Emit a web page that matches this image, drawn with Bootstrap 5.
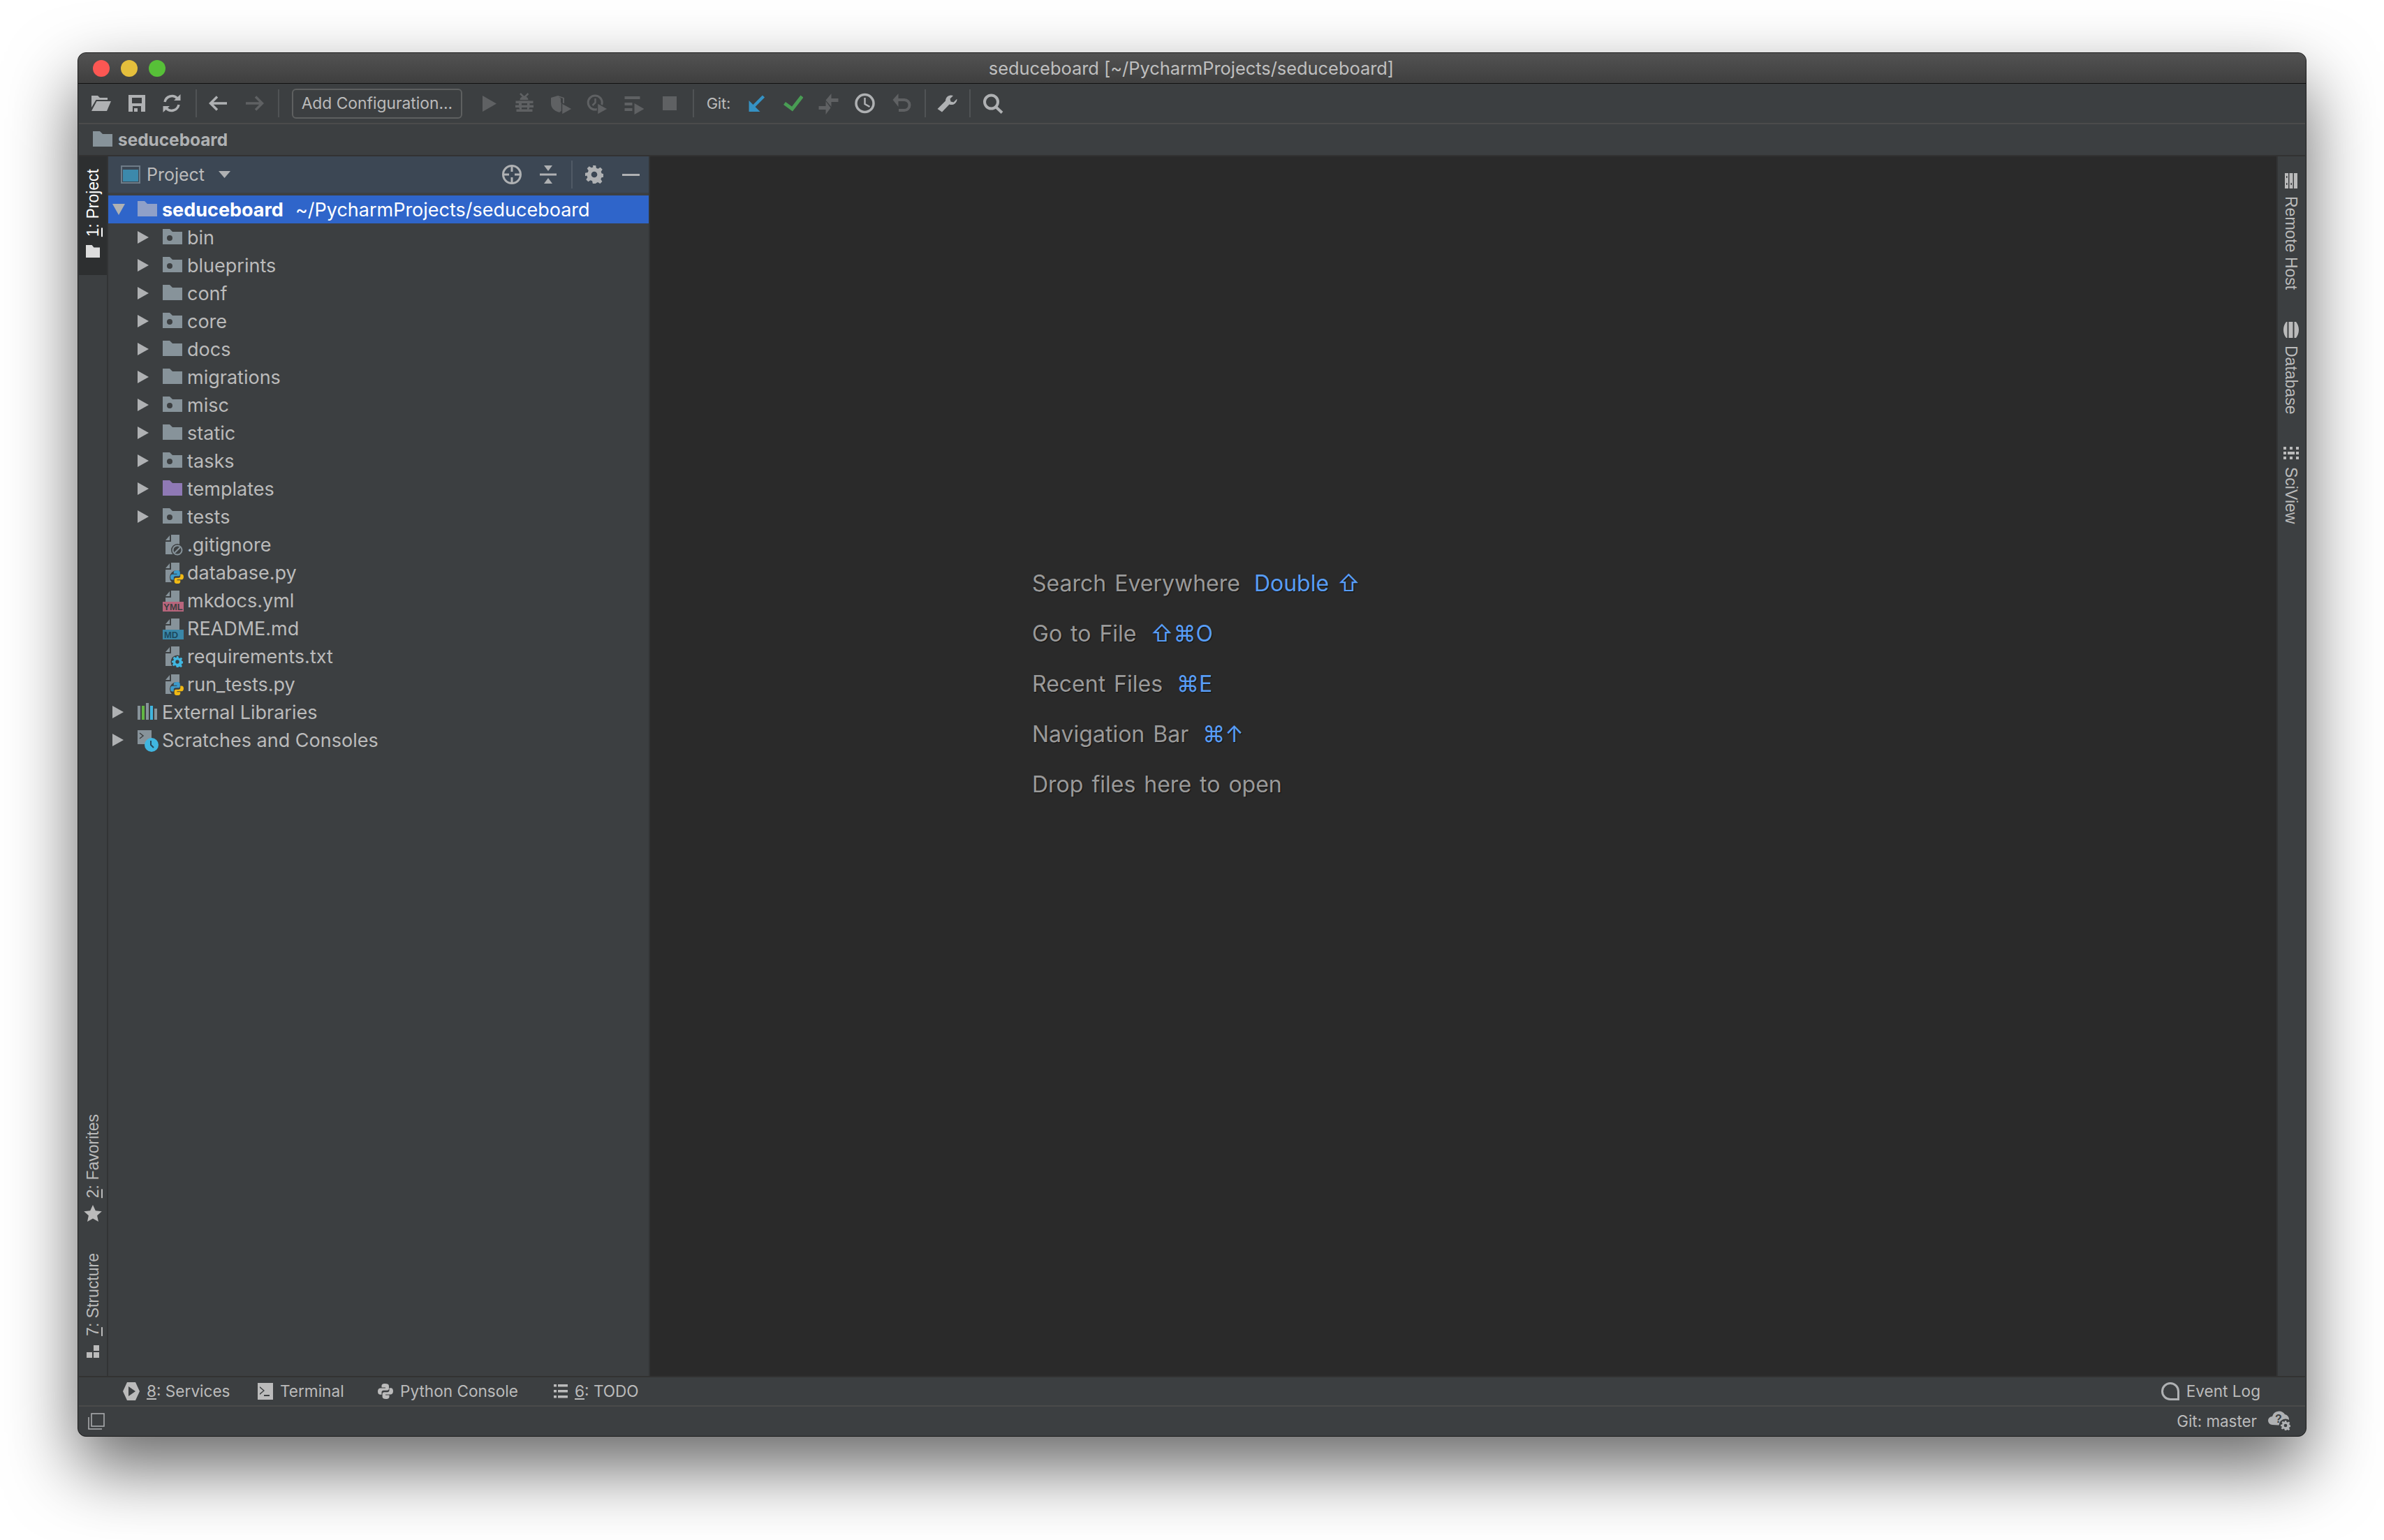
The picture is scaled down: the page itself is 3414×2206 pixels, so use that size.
<!DOCTYPE html>
<html lang="en">
<head>
<meta charset="utf-8">
<title>seduceboard</title>
<link rel="stylesheet" href="https://cdn.jsdelivr.net/npm/bootstrap@5.3.0/dist/css/bootstrap.min.css">
<style>
html,body{height:100%;margin:0}
body{background:#fff;font-family:Inter,"Liberation Sans",sans-serif;padding:75px 111px 148px;overflow:hidden}
.ide-win{height:1983px;border:1px solid #1c1c1c;border-radius:12px;overflow:hidden;box-shadow:0 44px 100px rgba(0,0,0,.6);background:#3c3f41;color:#bbb;padding:0 1px;font-size:26px}
.ide-title{height:44px;flex:none;background:linear-gradient(#525252,#3f3f3f);border-bottom:1px solid #111;margin:0 -1px;padding:0 21px;position:relative}
.tl{width:24px;height:24px;border-radius:50%;margin-right:16px}
.tl-r{background:#fc5753}.tl-y{background:#e5bf3c}.tl-g{background:#57c038}
.ide-title-text{position:absolute;left:-2px;right:0;text-align:center;color:#bfbfbf;font-size:25.4px;line-height:43px}
.ide-tb{height:58px;border-bottom:2px solid #4b4b4b;padding-left:6.5px;flex:none}
.slot{width:51.6px;height:44px;flex:none}
.slot-a{width:50.8px}
.slot-w{width:53px}
.slot-g{width:52px}
.vsep{width:2px;height:40px;background:#505355;flex:none}
.vs1{margin:0 3.5px 0 8px}
.vs2{margin:0 0 0 6.5px}
.vs3{margin:0 0 0 7.2px}
.vs4{margin:0 5.5px 0 6.5px}
.addcfg{width:244px;height:43px;margin-left:18px;margin-right:13px;border:2px solid #5e6060;border-radius:6px;color:#bbb;font-size:22.8px;padding:0;line-height:1;flex:none;background:transparent;white-space:nowrap}
.gitlbl{width:45.5px;flex:none;margin-left:18px;font-size:22px;color:#bbb;letter-spacing:-.2px}
.ide-nav{height:46px;flex:none;padding-left:20px;gap:8px;border-bottom:2px solid #323232;font-weight:700;color:#afb1b3;font-size:24.4px}
.ide-main{min-height:0}
.strip-l{width:42px;border-right:2px solid #323435;flex:none}
.strip-r{width:41px;flex:none;border-left:2px solid #323435;padding:24px 2px 0 0}
.vtext{writing-mode:vertical-rl;font-family:"Liberation Sans",sans-serif;font-size:23px;line-height:1;color:#bbb;white-space:nowrap}
.vflip{transform:rotate(180deg)}
.strip-item{padding:18px 0 25px;gap:12px}
.strip-on{background:#2d2f30;color:#fff}
.strip-on .vtext{color:#fff}
.fav-item{padding-bottom:0;margin-bottom:45px;gap:10px}
.str-item{padding:0 0 26px;gap:13px}
.r-item{gap:11px;margin-bottom:46px}
.panel{width:776px;flex:none;border-right:2px solid #323435}
.panel-h{height:52px;background:#3c4754;margin-bottom:4px;padding-left:18px;flex:none;color:#bbb}
.panel-title{margin-left:9px;margin-right:20px;width:83px;font-size:25px;padding-top:2px}
.pact{width:52px;height:40px;flex:none}
.pvsep{width:2px;height:40px;background:#505a66;flex:none;margin:0 5.5px 0 7px}
.tree{--bs-list-group-bg:transparent;--bs-list-group-border-width:0;--bs-list-group-color:#bbb;--bs-list-group-item-padding-y:0;--bs-list-group-item-padding-x:0;border-radius:0}
.tree .list-group-item{height:40px;display:flex;align-items:center;padding:2px 0 0 6px;font-size:27px;white-space:nowrap;border-radius:0}
.tree .list-group-item.lv1{padding-left:42px}
.tree .list-group-item.sel{background:#2f65ca;color:#fff}
.tw{width:36px;flex:none;display:flex}
.ti{width:35px;flex:none;display:flex}
.tw svg,.ti svg{display:block;margin-top:-2px;overflow:visible}
.root-name{font-weight:700;margin-right:17px}
.editor{background:#2a2a2a;padding:576px 0 0 547px;min-width:0}
.hint{height:72px;font-size:32px;word-spacing:3px;color:#9a9a9a;line-height:72px;text-shadow:1px 1px 1px #111;white-space:nowrap;flex:none}
.key{color:#589df6;margin-left:20px}
.bar-t{height:42px;flex:none;border-top:2px solid #323232;font-size:22.6px;padding-left:63px;color:#bbb}
.bar-i{gap:10px;flex:none}
.bar-i svg{flex:none}
.bi1{width:193px}.bi2{width:172px}.bi3{width:252px}
.bar-s{height:44px;flex:none;border-top:2px solid #4a4a4a;padding:0 19px 0 12px;font-size:22.4px;color:#bbb}
</style>
</head>
<body>
<svg width="0" height="0" class="position-absolute">
<defs>
<symbol id="fold" viewBox="0 0 28 32"><path d="M0 4h10l4 4h14v18H0z"/></symbol>
<symbol id="fmod" viewBox="0 0 28 32"><path fill-rule="evenodd" d="M0 4h10l4 4h14v18H0zM10 13a4 4 0 1 0 0 8 4 4 0 0 0 0-8z"/></symbol>
<symbol id="tri" viewBox="0 0 16 18"><path d="M0 0l16 9-16 9z"/></symbol>
<symbol id="page" viewBox="0 0 32 32"><path fill="#87939a" d="M12 2h12v28H4V12h8zM4 10l6-7v7z"/></symbol>
<symbol id="py" viewBox="0 0 20 20"><path fill="#3d9bcb" d="M9.500 0C6 0 5 1.300 5 3v2h5v1H3C1 6 0 8 0 10.300s1 4 3 4h2v-3c0-1.500 1-2.500 2.500-2.500h4.700c1.300 0 2.300-1 2.300-2.300V3c0-2-2-3-5-3z"/><path fill="#f0b914" d="M10.500 20c3.500 0 4.500-1.300 4.500-3v-2h-5v-1h7c2 0 3-2 3-4.300s-1-4-3-4h-2v3c0 1.500-1 2.500-2.500 2.500H8.300c-1.300 0-2.300 1-2.300 2.300V17c0 2 2 3 4.500 3z"/></symbol>
<symbol id="pyg" viewBox="0 0 20 20"><path d="M9.500 0C6 0 5 1.300 5 3v2h5v1H3C1 6 0 8 0 10.300s1 4 3 4h2v-3c0-1.500 1-2.500 2.500-2.500h4.700c1.300 0 2.300-1 2.300-2.300V3c0-2-2-3-5-3z"/><path d="M10.500 20c3.500 0 4.500-1.300 4.500-3v-2h-5v-1h7c2 0 3-2 3-4.300s-1-4-3-4h-2v3c0 1.500-1 2.500-2.500 2.500H8.300c-1.300 0-2.300 1-2.300 2.300V17c0 2 2 3 4.500 3z"/></symbol>
<symbol id="gear" viewBox="0 0 24 24"><path fill-rule="evenodd" d="M10 0h4l.7 3.400 2.300 1 3-1.900 2.800 2.800-1.900 3 1 2.300 3.100.7v4l-3.400.7-1 2.300 1.900 3-2.800 2.800-3-1.900-2.300 1L14 24h-4l-.7-3.400-2.300-1-3 1.900-2.800-2.800 1.900-3-1-2.300L0 14v-4l3.400-.7 1-2.300-1.900-3 2.800-2.800 3 1.900 2.300-1zM12 8a4 4 0 1 0 0 8 4 4 0 0 0 0-8z"/></symbol>
</defs>
</svg>
<div class="ide-win d-flex flex-column">
  <div class="ide-title d-flex align-items-center">
    <span class="tl tl-r"></span><span class="tl tl-y"></span><span class="tl tl-g"></span>
    <span class="ide-title-text">seduceboard [~/PycharmProjects/seduceboard]</span>
  </div>
  <div class="ide-tb d-flex align-items-center">
    <span class="slot slot-a d-flex align-items-center justify-content-center"><svg width="28" height="24" viewBox="0 0 28 24" fill="#afb1b3"><path d="M0 1h9l3 3h11v3H6.500L0 18z"/><path d="M7.500 9H28l-6 14H0z"/></svg></span>
    <span class="slot slot-a d-flex align-items-center justify-content-center"><svg width="24" height="24" viewBox="0 0 24 24" fill="#afb1b3"><path fill-rule="evenodd" d="M0 0h24v24H0zM5 4v8h14V4zM6 16v8h12v-8zM8 19h5v5H8z"/></svg></span>
    <span class="slot slot-a d-flex align-items-center justify-content-center"><svg width="26" height="26" viewBox="0 0 26 26" fill="none" stroke="#afb1b3" stroke-width="3.500"><path d="M3 11A10.500 10.500 0 0 1 21 6"/><path d="M23 15A10.500 10.500 0 0 1 5 20"/><path fill="#afb1b3" stroke="none" d="M16 9h9.500V0zM10 17H.5v9z"/></svg></span>
    <span class="vsep vs1"></span>
    <span class="slot slot-w d-flex align-items-center justify-content-center"><svg width="26" height="22" viewBox="0 0 26 22" fill="none" stroke="#afb1b3" stroke-width="3.500"><path d="M26 11H3M12 1.500L2.500 11l9.500 9.500"/></svg></span>
    <span class="slot slot-w d-flex align-items-center justify-content-center"><svg width="26" height="22" viewBox="0 0 26 22" fill="none" stroke="#5f6163" stroke-width="3.500"><path d="M0 11h23M14 1.500l9.500 9.500-9.500 9.500"/></svg></span>
    <span class="vsep vs2"></span>
    <button type="button" class="btn addcfg">Add Configuration...</button>
    <span class="slot d-flex align-items-center justify-content-center"><svg width="30" height="36" viewBox="0 0 30 36" fill="#5f6163"><path d="M5 7l20 11.500L5 30z"/></svg></span>
    <span class="slot d-flex align-items-center justify-content-center"><svg width="30" height="36" viewBox="0 0 30 36" fill="#5f6163"><path d="M8 4l4.500 4.500h2.500L19.500 4" fill="none" stroke="#5f6163" stroke-width="2.500"/><path d="M7.500 13a6 5 0 0 1 12 0z"/><path d="M6 14.500h15.500V22C21.500 27 18 30 13.700 30 9.500 30 6 27 6 22z"/><path d="M1.500 14.500h25v3.500h-25zM1 20.500h26V24H1zM2.500 26.500h23V30h-23z"/><path fill="#3c3f41" d="M10 18h8v2.500h-8zM10 24h8v2.500h-8z"/></svg></span>
    <span class="slot d-flex align-items-center justify-content-center"><svg width="30" height="36" viewBox="0 0 30 36" fill="#5f6163"><path d="M0 10l10-3 9 3v8l-3 1v9l-4 3C4 29 0 24 0 18z"/><path fill="#3c3f41" d="M11 9l6 2v6h-3v-6z"/><path stroke="#3c3f41" stroke-width="1.500" d="M15.500 17.500l15 8.500-15 8.500z"/></svg></span>
    <span class="slot d-flex align-items-center justify-content-center"><svg width="30" height="36" viewBox="0 0 30 36" fill="none" stroke="#5f6163" stroke-width="3"><circle cx="12.200" cy="17" r="10"/><path d="M12.500 11v6l-4 4" stroke-width="2.500"/><path fill="#5f6163" stroke="#3c3f41" stroke-width="1.500" d="M15.500 17.500l15 8.500-15 8.500z"/></svg></span>
    <span class="slot d-flex align-items-center justify-content-center"><svg width="30" height="36" viewBox="0 0 30 36" fill="#5f6163"><path d="M2.500 8h22v4h-22zM2.500 17h11v4h-11zM2.500 25h11v4h-11zM16.500 18l14 8-14 8z"/></svg></span>
    <span class="slot d-flex align-items-center justify-content-center"><svg width="30" height="36" viewBox="0 0 30 36" fill="#5f6163"><path d="M5 8h20v20H5z"/></svg></span>
    <span class="vsep vs3"></span>
    <span class="gitlbl">Git:</span>
    <span class="slot slot-g d-flex align-items-center justify-content-center"><svg width="30" height="36" viewBox="0 0 30 36"><path d="M25.500 8l-17 17" fill="none" stroke="#3592c4" stroke-width="4.500"/><path fill="#3592c4" d="M4.500 14v16h16z"/></svg></span>
    <span class="slot slot-g d-flex align-items-center justify-content-center"><svg width="30" height="36" viewBox="0 0 30 36" fill="none" stroke="#499c54" stroke-width="5"><path d="M3.500 18l11 8 14-18"/></svg></span>
    <span class="slot slot-g d-flex align-items-center justify-content-center"><svg width="30" height="36" viewBox="0 0 30 36" fill="#5f6163"><path d="M18.500 11h10v5h-10zM10.500 13.500l8-9.500v19zM.5 22h10v5H.5zM10.500 15l7 9.500-7 9.500z"/></svg></span>
    <span class="slot slot-g d-flex align-items-center justify-content-center"><svg width="30" height="36" viewBox="0 0 30 36" fill="none" stroke="#afb1b3" stroke-width="3.500"><circle cx="14.500" cy="18" r="12.500"/><path d="M14.500 10v9l7 4" stroke-width="2.500"/></svg></span>
    <span class="slot slot-g d-flex align-items-center justify-content-center"><svg width="30" height="36" viewBox="0 0 30 36" fill="#5f6163"><path d="M10 13h9a7.500 7.500 0 0 1 0 15h-8" fill="none" stroke="#5f6163" stroke-width="4"/><path d="M2.500 13l8-9v19z"/></svg></span>
    <span class="vsep vs2"></span>
    <span class="slot slot-g d-flex align-items-center justify-content-center ms-1"><svg width="30" height="36" viewBox="0 0 30 36" fill="#afb1b3"><path d="M29.500 12a8 8 0 0 1-11 7.500L8 30.500 1.500 26 13 14.500A8 8 0 0 1 24 7l-4.500 4.500 1 4 4 1 4.500-4.500z"/></svg></span>
    <span class="vsep vs4"></span>
    <span class="slot slot-g d-flex align-items-center justify-content-center"><svg width="30" height="36" viewBox="0 0 30 36" fill="none" stroke="#afb1b3" stroke-width="4"><circle cx="12.500" cy="16" r="9.500"/><path d="M19 23l9 8.500"/></svg></span>
  </div>
  <div class="ide-nav d-flex align-items-center">
    <svg width="28" height="32" fill="#87939a" class="flex-shrink-0"><use href="#fold"/></svg>
    <span>seduceboard</span>
  </div>
  <div class="ide-main d-flex flex-grow-1">
    <div class="strip-l d-flex flex-column align-items-center">
      <div class="strip-item strip-on d-flex flex-column align-items-center w-100">
        <span class="vtext vflip"><u>1</u>: Project</span>
        <svg width="20" height="18" viewBox="0 0 28 26" fill="#ddd" preserveAspectRatio="none"><path d="M0 0h12l4 5h12v21H0z"/></svg>
      </div>
      <div class="strip-item fav-item d-flex flex-column align-items-center mt-auto">
        <span class="vtext vflip"><u>2</u>: Favorites</span>
        <svg width="26" height="24" viewBox="0 0 26 24" fill="#bbb"><path d="M13 0l3.800 8.200 9 1-6.700 6 1.900 8.800L13 19.500 5 24l1.900-8.800-6.700-6 9-1z"/></svg>
      </div>
      <div class="str-item d-flex flex-column align-items-center">
        <span class="vtext vflip"><u>7</u>: Structure</span>
        <svg width="18" height="18" viewBox="0 0 18 18" fill="#bbb"><path d="M10 0h8v8h-8zM0 10h8v8H0zM10 10h8v8h-8z"/></svg>
      </div>
    </div>
    <div class="panel d-flex flex-column">
      <div class="panel-h d-flex align-items-center">
        <svg width="28" height="26" viewBox="0 0 28 26" class="flex-shrink-0"><path fill="#6e7c88" d="M0 0h28v26H0z"/><path fill="#3c4754" d="M2 2h24v22H2z"/><path fill="#3c89ab" d="M3 6h22v17H3z"/></svg>
        <span class="panel-title">Project</span>
        <svg width="17" height="10" viewBox="0 0 17 10" fill="#afb1b3" class="flex-shrink-0"><path d="M0 0h17l-8.500 10z"/></svg>
        <span class="flex-grow-1"></span>
        <span class="pact d-flex align-items-center justify-content-center"><svg width="28" height="28" viewBox="0 0 28 28" fill="none" stroke="#afb1b3" stroke-width="3"><circle cx="14" cy="14" r="12.500"/><path d="M14 1v9M14 18v9M1 14h9M18 14h9"/></svg></span>
        <span class="pact d-flex align-items-center justify-content-center"><svg width="24" height="26" viewBox="0 0 24 26" fill="#afb1b3"><path d="M0 11.500h24v3H0zM6 0h12l-6 8zM6 26h12l-6-8z"/></svg></span>
        <span class="pvsep"></span>
        <span class="pact d-flex align-items-center justify-content-center"><svg width="26" height="26" fill="#afb1b3"><use href="#gear"/></svg></span>
        <span class="pact d-flex align-items-center justify-content-center"><svg width="25" height="3" viewBox="0 0 25 3" fill="#afb1b3"><path d="M0 0h25v3H0z"/></svg></span>
      </div>
      <ul class="list-group tree">
        <li class="list-group-item sel"><span class="tw"><svg width="18" height="16" viewBox="0 0 18 16" fill="#afb1b3"><path d="M0 0h18l-9 16z"/></svg></span><span class="ti"><svg width="28" height="32" fill="#8fa0c8"><use href="#fold"/></svg></span><span class="root-name">seduceboard</span><span>~/PycharmProjects/seduceboard</span></li>
        <li class="list-group-item lv1"><span class="tw"><svg width="16" height="18" fill="#afb1b3"><use href="#tri"/></svg></span><span class="ti"><svg width="28" height="32" fill="#87939a"><use href="#fmod"/></svg></span>bin</li>
        <li class="list-group-item lv1"><span class="tw"><svg width="16" height="18" fill="#afb1b3"><use href="#tri"/></svg></span><span class="ti"><svg width="28" height="32" fill="#87939a"><use href="#fmod"/></svg></span>blueprints</li>
        <li class="list-group-item lv1"><span class="tw"><svg width="16" height="18" fill="#afb1b3"><use href="#tri"/></svg></span><span class="ti"><svg width="28" height="32" fill="#87939a"><use href="#fold"/></svg></span>conf</li>
        <li class="list-group-item lv1"><span class="tw"><svg width="16" height="18" fill="#afb1b3"><use href="#tri"/></svg></span><span class="ti"><svg width="28" height="32" fill="#87939a"><use href="#fmod"/></svg></span>core</li>
        <li class="list-group-item lv1"><span class="tw"><svg width="16" height="18" fill="#afb1b3"><use href="#tri"/></svg></span><span class="ti"><svg width="28" height="32" fill="#87939a"><use href="#fold"/></svg></span>docs</li>
        <li class="list-group-item lv1"><span class="tw"><svg width="16" height="18" fill="#afb1b3"><use href="#tri"/></svg></span><span class="ti"><svg width="28" height="32" fill="#87939a"><use href="#fold"/></svg></span>migrations</li>
        <li class="list-group-item lv1"><span class="tw"><svg width="16" height="18" fill="#afb1b3"><use href="#tri"/></svg></span><span class="ti"><svg width="28" height="32" fill="#87939a"><use href="#fmod"/></svg></span>misc</li>
        <li class="list-group-item lv1"><span class="tw"><svg width="16" height="18" fill="#afb1b3"><use href="#tri"/></svg></span><span class="ti"><svg width="28" height="32" fill="#87939a"><use href="#fold"/></svg></span>static</li>
        <li class="list-group-item lv1"><span class="tw"><svg width="16" height="18" fill="#afb1b3"><use href="#tri"/></svg></span><span class="ti"><svg width="28" height="32" fill="#87939a"><use href="#fmod"/></svg></span>tasks</li>
        <li class="list-group-item lv1"><span class="tw"><svg width="16" height="18" fill="#afb1b3"><use href="#tri"/></svg></span><span class="ti"><svg width="28" height="32" fill="#8f79b5"><use href="#fold"/></svg></span>templates</li>
        <li class="list-group-item lv1"><span class="tw"><svg width="16" height="18" fill="#afb1b3"><use href="#tri"/></svg></span><span class="ti"><svg width="28" height="32" fill="#87939a"><use href="#fmod"/></svg></span>tests</li>
        <li class="list-group-item lv1"><span class="tw"></span><span class="ti"><svg width="32" height="32" viewBox="0 0 32 32"><use href="#page"/><circle cx="21" cy="24" r="9" fill="#3c3f41"/><circle cx="21" cy="24" r="6.500" fill="none" stroke="#87939a" stroke-width="2"/><path d="M17 28l8-8" stroke="#87939a" stroke-width="2"/></svg></span>.gitignore</li>
        <li class="list-group-item lv1"><span class="tw"></span><span class="ti"><svg width="32" height="32" viewBox="0 0 32 32"><use href="#page"/><circle cx="20" cy="23" r="10" fill="#3c3f41"/><use href="#py" x="11" y="13" width="19" height="19"/></svg></span>database.py</li>
        <li class="list-group-item lv1"><span class="tw"></span><span class="ti"><svg width="32" height="32" viewBox="0 0 32 32"><path fill="#87939a" d="M12 2h12v16H4v-6h8zM4 10l6-7v7z"/><path fill="#b8657c" d="M0 18h30v14H0z"/><text x="15" y="30" text-anchor="middle" font-family="Liberation Sans" font-weight="700" font-size="13" fill="#3c3f41">YML</text></svg></span>mkdocs.yml</li>
        <li class="list-group-item lv1"><span class="tw"></span><span class="ti"><svg width="32" height="32" viewBox="0 0 32 32"><path fill="#87939a" d="M12 2h12v16H4v-6h8zM4 10l6-7v7z"/><path fill="#3a87a8" d="M0 18h30v14H0z"/><text x="12" y="30" text-anchor="middle" font-family="Liberation Sans" font-weight="700" font-size="13" fill="#1d4a60">MD</text></svg></span>README.md</li>
        <li class="list-group-item lv1"><span class="tw"></span><span class="ti"><svg width="32" height="32" viewBox="0 0 32 32"><use href="#page"/><circle cx="21" cy="24" r="9.500" fill="#3c3f41"/><use href="#gear" x="13" y="16" width="16" height="16" fill="#40b6e0"/></svg></span>requirements.txt</li>
        <li class="list-group-item lv1"><span class="tw"></span><span class="ti"><svg width="32" height="32" viewBox="0 0 32 32"><use href="#page"/><circle cx="20" cy="23" r="10" fill="#3c3f41"/><use href="#py" x="11" y="13" width="19" height="19"/></svg></span>run_tests.py</li>
        <li class="list-group-item"><span class="tw"><svg width="16" height="18" fill="#afb1b3"><use href="#tri"/></svg></span><span class="ti"><svg width="32" height="32" viewBox="0 0 32 32"><path fill="#87939a" d="M0 7h4v20H0zM12 3h4v24h-4zM24 11h4v16h-4z"/><path fill="#62b543" d="M6 7h4v20H6z"/><path fill="#40b6e0" d="M18 7h4v20h-4z"/></svg></span>External Libraries</li>
        <li class="list-group-item"><span class="tw"><svg width="16" height="18" fill="#afb1b3"><use href="#tri"/></svg></span><span class="ti"><svg width="32" height="32" viewBox="0 0 32 32"><path fill="#87939a" d="M0 2h20v20H0z"/><path d="M3 6l5 4-5 4" fill="none" stroke="#3c3f41" stroke-width="1.500"/><circle cx="20" cy="23" r="10" fill="#40b6e0"/><path d="M19 17v6l4 4" fill="none" stroke="#27485c" stroke-width="2"/></svg></span>Scratches and Consoles</li>
      </ul>
    </div>
    <div class="editor flex-grow-1 d-flex flex-column">
      <div class="hint">Search Everywhere<span class="key">Double ⇧</span></div>
      <div class="hint">Go to File<span class="key">⇧⌘O</span></div>
      <div class="hint">Recent Files<span class="key">⌘E</span></div>
      <div class="hint">Navigation Bar<span class="key">⌘↑</span></div>
      <div class="hint">Drop files here to open</div>
    </div>
    <div class="strip-r d-flex flex-column align-items-center">
      <div class="r-item d-flex flex-column align-items-center">
        <svg width="18" height="22" viewBox="0 0 18 22" fill="#bbb"><path d="M0 0h5v22H0zM6.500 0h5v22h-5zM13 0h5v22h-5z"/><path fill="#3c3f41" d="M2 4h1.500v3H2zM2 14h1.500v3H2zM8.500 14H10v3H8.500z"/></svg>
        <span class="vtext">Remote Host</span>
      </div>
      <div class="r-item d-flex flex-column align-items-center">
        <svg width="22" height="23" viewBox="0 0 22 23" fill="#bbb"><path d="M4 0h1.500v23H4C1.500 20 0 16 0 11.500S1.500 3 4 0zM7.500 0h6v23h-6zM15.500 0H18c2.500 3 4 7 4 11.500S20.500 20 18 23h-2.500z"/></svg>
        <span class="vtext">Database</span>
      </div>
      <div class="r-item d-flex flex-column align-items-center">
        <svg width="22" height="18" viewBox="0 0 22 18" fill="#bbb"><path d="M0 0h4v4H0zM9 0h4v4H9zM18 0h4v4h-4zM0 7h4v4H0zM6 7h10v4H6zM18 7h4v4h-4zM0 14h4v4H0zM9 14h4v4H9zM18 14h4v4h-4z"/></svg>
        <span class="vtext">SciView</span>
      </div>
    </div>
  </div>
  <div class="bar-t d-flex align-items-center">
    <span class="bar-i bi1 d-flex align-items-center"><svg width="24" height="26" viewBox="0 0 24 26" fill="#bbb"><path fill-rule="evenodd" d="M6 0h12l6 13-6 13H6L0 13zM8 6v14l10-7z"/></svg><span><u>8</u>: Services</span></span>
    <span class="bar-i bi2 d-flex align-items-center"><svg width="22" height="24" viewBox="0 0 22 24" fill="#bbb"><path fill-rule="evenodd" d="M0 0h22v24H0zM3 5v2l5 4-5 4v2l7-6zM9 17v2h8v-2z"/></svg><span>Terminal</span></span>
    <span class="bar-i bi3 d-flex align-items-center"><svg width="22" height="26" fill="#bbb"><use href="#pyg"/></svg><span>Python Console</span></span>
    <span class="bar-i d-flex align-items-center"><svg width="20" height="20" viewBox="0 0 20 20" fill="#bbb"><path d="M0 0h4v3.500H0zM6 0h14v3.500H6zM0 8h4v3.500H0zM6 8h14v3.500H6zM0 16h4v3.500H0zM6 16h14v3.500H6z"/></svg><span><u>6</u>: TODO</span></span>
    <span class="bar-i d-flex align-items-center ms-auto"><svg width="26" height="26" viewBox="0 0 26 26" fill="none" stroke="#afb1b3" stroke-width="3"><path d="M24.500 24.500H13A11.500 11.500 0 1 1 24.500 13z"/></svg><span>Event Log</span></span>
    <span class="pe-5 ms-3"></span>
  </div>
  <div class="bar-s d-flex align-items-center">
    <svg width="25" height="24" viewBox="0 0 25 24" fill="none" stroke="#afb1b3" stroke-width="1.500"><path d="M6 1h18v18H6z"/><path d="M2 6v17h19"/></svg>
    <span class="ms-auto">Git: master</span>
    <svg width="34" height="30" viewBox="0 0 34 30" class="ms-3"><path fill="#afb1b3" d="M6 20a6 6 0 0 1 0-12 10 10 0 0 1 18-3 8 8 0 0 1 6 8l-8 8z"/><text x="15" y="17" text-anchor="middle" font-family="Liberation Sans" font-weight="700" font-size="16" fill="#3c3f41">?</text><circle cx="25" cy="21" r="9.500" fill="#3c3f41"/><use href="#gear" x="18" y="14" width="14" height="14" fill="#afb1b3"/></svg>
  </div>
</div>
<script src="https://cdn.jsdelivr.net/npm/bootstrap@5.3.0/dist/js/bootstrap.bundle.min.js"></script>
</body>
</html>
